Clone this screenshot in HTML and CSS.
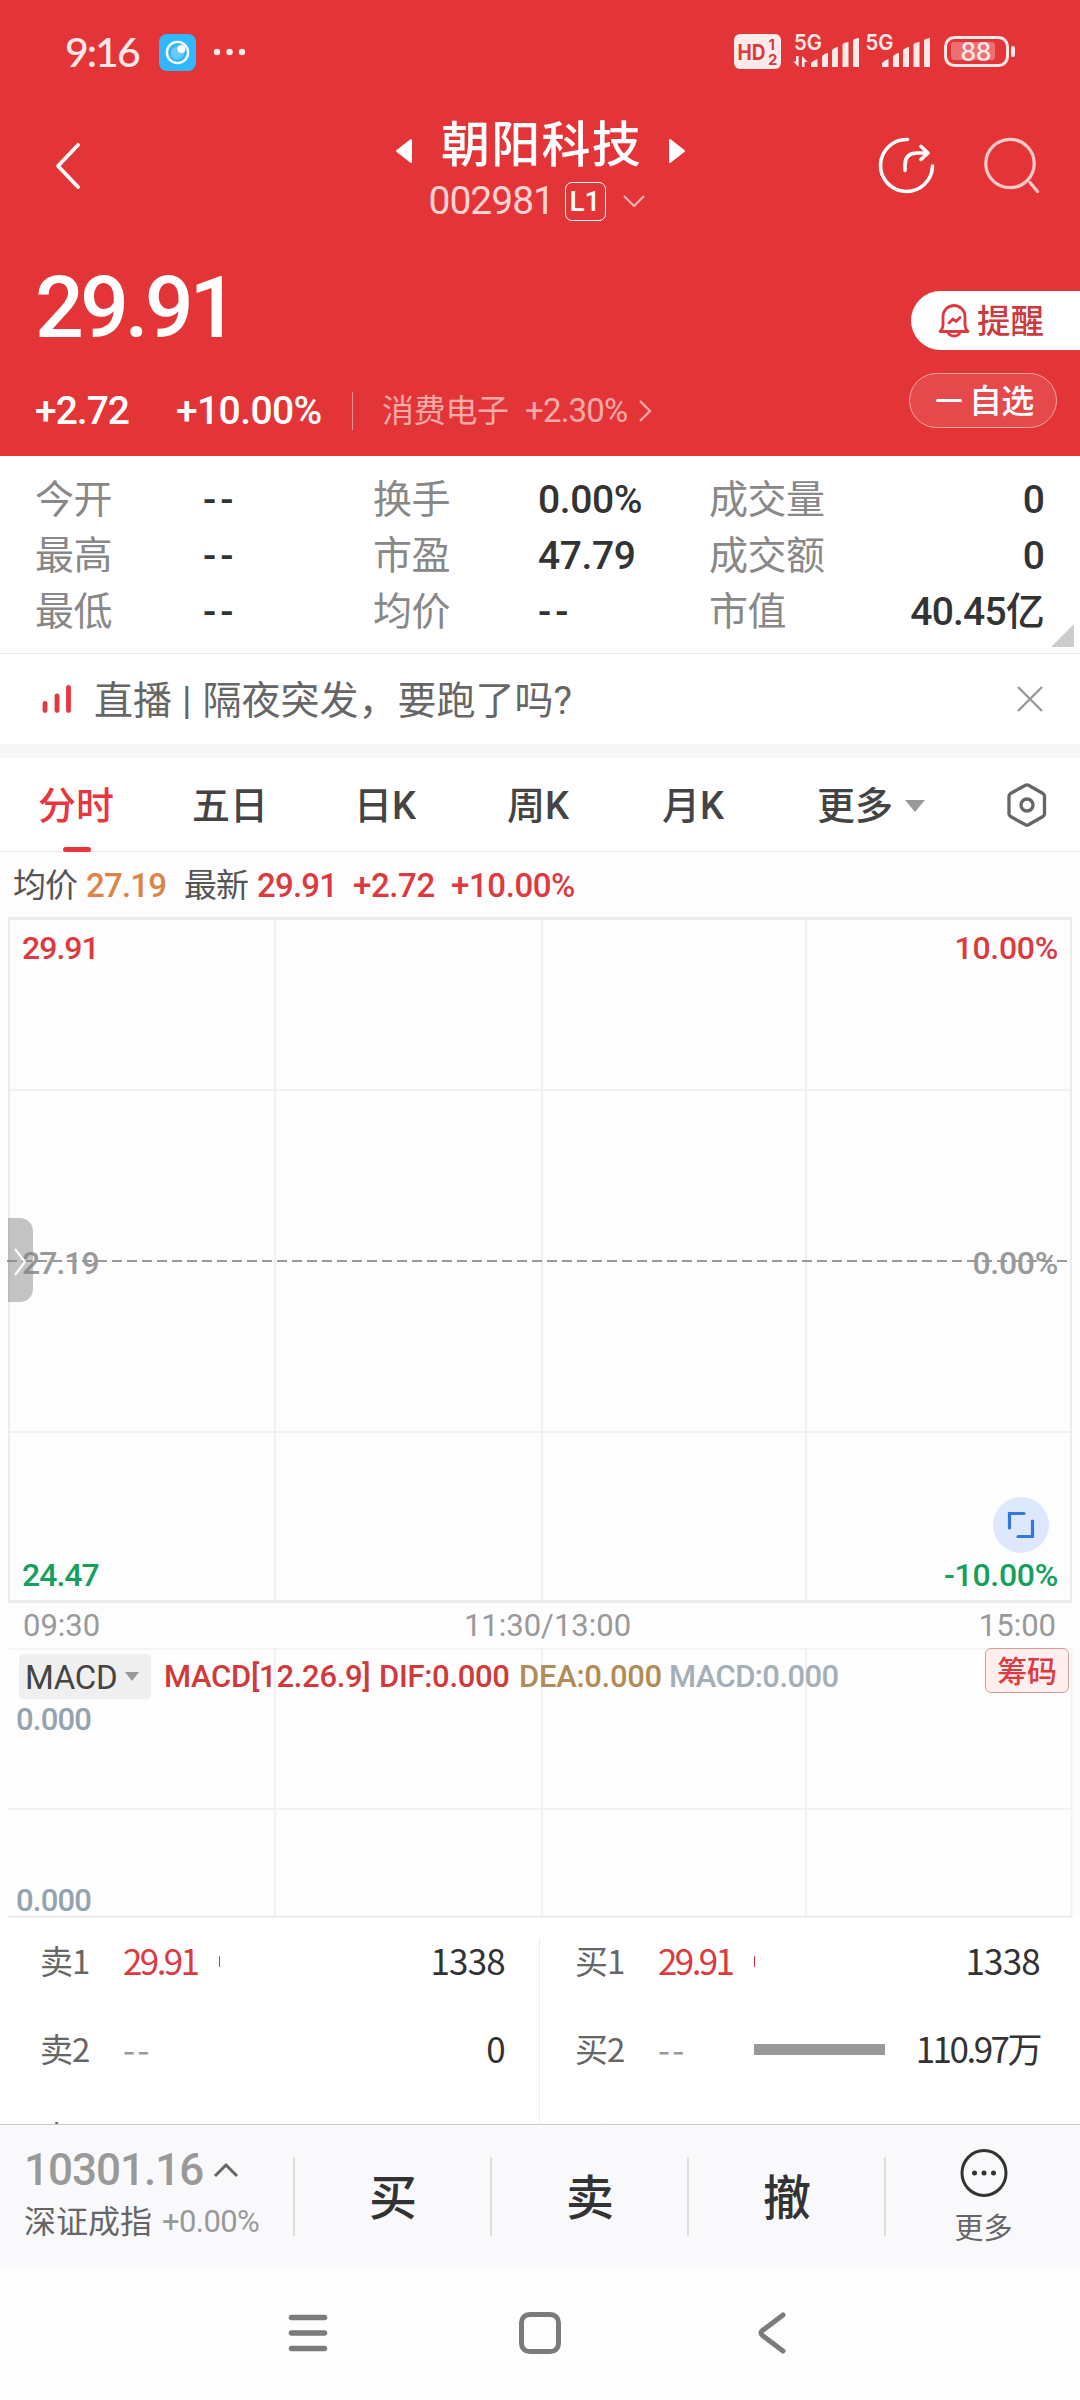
FILE: index.html
```html
<!DOCTYPE html>
<html lang="zh-CN">
<head>
<meta charset="utf-8">
<title>朝阳科技 002981</title>
<link rel="stylesheet" href="styles.css">
</head>
<body>
<div class="phone">
  <header class="header">
    <div class="status">
      <span class="clock">9:16</span>
      <svg class="app-icon" width="37" height="37" viewBox="0 0 37 37"><rect width="37" height="37" rx="8" fill="#30b7ff"/><circle cx="18.5" cy="18.5" r="10.6" fill="none" stroke="#fff" stroke-width="2.4"/><circle cx="18.5" cy="18.8" r="6.6" fill="#6cc8fb"/><circle cx="22.4" cy="15" r="4" fill="#fff"/></svg>
      <svg class="dots" width="34" height="8" viewBox="0 0 34 8"><g fill="#ffe8e8"><circle cx="4" cy="4" r="3.2"/><circle cx="16.6" cy="4" r="3.2"/><circle cx="29" cy="4" r="3.2"/></g></svg>
      <svg class="status-right" width="290" height="40" viewBox="730 32 290 40">
        <rect x="734" y="34" width="47" height="35" rx="6" fill="#fdeaea"/>
        <g class="hd"><text x="737.5" y="59.5" font-size="21" textLength="28" lengthAdjust="spacingAndGlyphs">HD</text><text x="768.5" y="50" font-size="15">1</text><text x="768" y="64.500" font-size="15">2</text></g>
        <g class="net"><text x="794" y="50" font-size="22" textLength="28" lengthAdjust="spacingAndGlyphs">5G</text><text x="865.500" y="50" font-size="22" textLength="28" lengthAdjust="spacingAndGlyphs">5G</text></g>
        <g fill="#ffe8e8">
          <path d="M811 67v-4q3-3 6.500-4v8zM822 67v-11q3-3 6-3v14zM832 67v-17q3-3 6-3v20zM842.500 67v-23q3-2 6-2v25zM853 67v-27q3-2 6-2v29z"/>
          <path d="M882 67v-4q3-3 6.500-4v8zM893 67v-11q3-3 6-3v14zM903 67v-17q3-3 6-3v20zM913.500 67v-23q3-2 6-2v25zM924 67v-27q3-2 6-2v29z"/>
          <rect x="1011" y="46" width="4" height="11" rx="2"/>
          <path d="M796 56h2.600v11L793 61.500h3zM802 67h2.600v-5h3L802 56z"/>
        </g>
        <rect x="945.500" y="37.500" width="62" height="28" rx="9" fill="none" stroke="#ffe8e8" stroke-width="3"/>
        <rect x="951" y="42" width="44" height="18" rx="3" fill="#ec6f71"/>
        <g class="net battery"><text x="960.500" y="61" font-size="25" textLength="31">88</text></g>
      </svg>
    </div>

    <div class="titlebar">
      <svg class="back" width="28" height="48" viewBox="0 0 28 48"><path d="M24 3L4 24l20 21" fill="none" stroke="#fff" stroke-width="3.800" stroke-linecap="round" stroke-linejoin="round"/></svg>
      <div class="title">
        <div class="name-row">
          <svg width="18" height="26" viewBox="0 0 18 26"><path d="M16 2v22L2 13z" fill="#fff" stroke="#fff" stroke-width="2" stroke-linejoin="round"/></svg>
          <h1>朝阳科技</h1>
          <svg width="18" height="26" viewBox="0 0 18 26"><path d="M2 2v22l14-11z" fill="#fff" stroke="#fff" stroke-width="2" stroke-linejoin="round"/></svg>
        </div>
        <div class="code-row">
          <span class="code">002981</span><span class="level">L1</span>
          <svg width="24" height="14" viewBox="0 0 24 14"><path d="M2 2l10 10L22 2" fill="none" stroke="#fbb3b4" stroke-width="2.200"/></svg>
        </div>
      </div>
      <svg class="share" width="60" height="60" viewBox="876 135 60 60"><g fill="none" stroke="#fff" stroke-width="3.600" stroke-linecap="round"><path d="M907.500 139.500A26 26 0 1 0 932.500 166"/><path d="M905 170.500v-5.500q0-12 12-12h10.500M921 146.500l7 6.500-7 6.500" stroke-linejoin="round"/></g></svg>
      <svg class="search" width="60" height="60" viewBox="982 135 60 60"><g fill="none" stroke="#ffcaca" stroke-width="3.200" stroke-linecap="round"><circle cx="1010" cy="163.500" r="24.200"/><path d="M1030 182.500l7.500 9"/></g></svg>
    </div>

    <div class="quote">
      <div class="quote-main">
        <div class="price">29.91</div>
        <div class="change-row">
          <span class="chg">+2.72</span><span class="pct">+10.00%</span><span class="bar"></span>
          <span class="sector">消费电子</span><span class="sector-pct">+2.30%</span>
          <svg width="14" height="24" viewBox="0 0 14 24"><path d="M2 2l10 10L2 22" fill="none" stroke="#fbaaab" stroke-width="2.400"/></svg>
        </div>
      </div>
      <div class="quote-actions">
        <div class="remind">
          <svg width="32" height="34" viewBox="0 0 32 34"><g fill="none" stroke="#dc3a40" stroke-width="2.800" stroke-linejoin="round" stroke-linecap="round"><path d="M2 27.500q3-3 3-6v-9a11 11 0 0 1 22 0v9q0 3 3 6z"/><path d="M10 28.500q1.500 3.500 6 3.500t6-3.500"/><path d="M11 19l4-4 3 2.500 4-4"/></g></svg>
          <span>提醒</span>
        </div>
        <div class="watch"><i></i><span>自选</span></div>
      </div>
    </div>
  </header>

  <section class="stats">
    <span class="k">今开</span><span class="v dash">--</span><span class="k">换手</span><span class="v">0.00%</span><span class="k">成交量</span><span class="v end">0</span>
    <span class="k">最高</span><span class="v dash">--</span><span class="k">市盈</span><span class="v">47.79</span><span class="k">成交额</span><span class="v end">0</span>
    <span class="k">最低</span><span class="v dash">--</span><span class="k">均价</span><span class="v dash">--</span><span class="k">市值</span><span class="v end">40.45亿</span>
    <i class="corner"></i>
  </section>

  <section class="notice">
    <svg width="30" height="30" viewBox="0 0 30 30"><g stroke="#e8363f" stroke-width="4.800" stroke-linecap="round"><path d="M3 19.500v7M15 12v14.500M26.500 3.500v23"/></g></svg>
    <span class="notice-text">直播<b>|</b>隔夜突发，要跑了吗?</span>
    <svg class="close" width="28" height="28" viewBox="0 0 28 28"><path d="M2 2l24 24M26 2L2 26" stroke="#999" stroke-width="2.400"/></svg>
  </section>

  <nav class="tabs">
    <span class="tab active">分时</span><span class="tab">五日</span><span class="tab">日K</span><span class="tab">周K</span><span class="tab">月K</span><span class="tab more">更多<i></i></span>
    <svg width="44" height="48" viewBox="0 0 44 48"><g fill="none" stroke="#666" stroke-width="3.300" stroke-linejoin="round"><path d="M20.500 4.300q1.500-.8 3 0l14.500 8.200q1.500 1 1.500 2.500v18q0 1.500-1.500 2.500l-14.500 8.200q-1.500.8-3 0L5.500 35.500Q4 34.500 4 33V15q0-1.500 1.500-2.500z"/><circle cx="22" cy="24" r="6"/></g></svg>
  </nav>

  <div class="summary">
    <span class="lbl">均价</span><span class="orange">27.19</span><span class="lbl l2">最新</span><span class="red p">29.91</span><span class="red c">+2.72</span><span class="red">+10.00%</span>
  </div>

  <section class="chart">
    <svg class="grid" width="1080" height="687" viewBox="0 916 1080 687">
      <g fill="#ececec">
        <rect x="8" y="917" width="1064" height="3"/><rect x="8" y="1600" width="1064" height="3"/>
        <rect x="8" y="917" width="2" height="686"/><rect x="1070" y="917" width="2" height="686"/>
      </g>
      <g fill="#f0f0f0">
        <rect x="274" y="920" width="2" height="680"/><rect x="541" y="920" width="2" height="680"/><rect x="805" y="920" width="2" height="680"/>
        <rect x="10" y="1089" width="1060" height="2"/><rect x="10" y="1431" width="1060" height="2"/>
      </g>
      <path d="M7 1261H1072" stroke="#999" stroke-width="2" stroke-dasharray="10 5"/>
    </svg>
    <span class="tick red top left">29.91</span><span class="tick red top right">10.00%</span>
    <span class="tick mid left">27.19</span><span class="tick mid right">0.00%</span>
    <span class="tick green bottom left">24.47</span><span class="tick green bottom right">-10.00%</span>
    <div class="handle"><svg width="14" height="30" viewBox="0 0 14 30"><path d="M2 2l10 13L2 28" fill="none" stroke="#fff" stroke-width="2.200"/></svg></div>
    <div class="expand"><svg width="28" height="28" viewBox="0 0 28 28"><path d="M2.500 17V2.500H17M25.500 10v15.500H11" fill="none" stroke="#3478dc" stroke-width="3.200" stroke-linecap="round"/></svg></div>
  </section>
  <div class="times"><span>09:30</span><span class="noon">11:30/13:00</span><span>15:00</span></div>

  <section class="macd">
    <svg class="grid" width="1080" height="270" viewBox="0 1648 1080 270">
      <g fill="#f2f2f2"><rect x="8" y="1648" width="1064" height="1.500"/><rect x="8" y="1808" width="1064" height="2"/><rect x="274" y="1648" width="2" height="269"/><rect x="541" y="1648" width="2" height="269"/><rect x="805" y="1648" width="2" height="269"/><rect x="1071" y="1648" width="1.500" height="269"/></g>
      <rect x="8" y="1916" width="1064" height="1.500" fill="#e8e8e8"/>
    </svg>
    <div class="macd-head">
      <span class="select">MACD<i></i></span>
      <span class="m1">MACD[12.26.9]</span><span class="m2">DIF:0.000</span><span class="m3">DEA:0.000</span><span class="m4">MACD:0.000</span>
      <span class="chips">筹码</span>
    </div>
    <div class="scale"><span>0.000</span><span>0.000</span></div>
  </section>

  <section class="book">
    <div class="side sell">
      <div class="row"><span class="lv">卖1</span><span class="pr">29.91</span><span class="vol"><i style="width:1px"></i></span><span class="qty">1338</span></div>
      <div class="row none"><span class="lv">卖2</span><span class="pr">--</span><span class="vol"></span><span class="qty">0</span></div>
      <div class="row none"><span class="lv">卖3</span><span class="pr">--</span><span class="vol"></span><span class="qty">0</span></div>
    </div>
    <div class="side buy">
      <div class="row"><span class="lv">买1</span><span class="pr">29.91</span><span class="vol"><i style="width:1px"></i></span><span class="qty">1338</span></div>
      <div class="row none"><span class="lv">买2</span><span class="pr">--</span><span class="vol"><i style="width:131px"></i></span><span class="qty wan">110.97万</span></div>
      <div class="row none"><span class="lv">买3</span><span class="pr">--</span><span class="vol"></span><span class="qty">0</span></div>
    </div>
  </section>

  <footer class="trade">
    <div class="index">
      <div class="idx-val"><span>10301.16</span><svg width="26" height="16" viewBox="0 0 26 16"><path d="M2 14L13 3l11 11" fill="none" stroke="#666" stroke-width="3"/></svg></div>
      <div class="idx-name"><span>深证成指</span><em>+0.00%</em></div>
    </div>
    <div class="act">买</div><div class="act">卖</div><div class="act">撤</div>
    <div class="act more-act">
      <svg width="48" height="50" viewBox="0 0 48 50"><ellipse cx="24" cy="25" rx="22" ry="22.500" fill="none" stroke="#333" stroke-width="3"/><g fill="#333"><circle cx="14.500" cy="25" r="2.500"/><circle cx="24" cy="25" r="2.500"/><circle cx="33.500" cy="25" r="2.500"/></g></svg>
      <span>更多</span>
    </div>
  </footer>

  <div class="sysnav">
    <svg width="46" height="46" viewBox="0 0 46 46"><path d="M6.500 7.500h33M6.500 23h33M6.500 38.500h33" stroke="#7b7b7b" stroke-width="5.600" stroke-linecap="round"/></svg>
    <svg width="46" height="46" viewBox="0 0 46 46"><rect x="4.500" y="4.500" width="37" height="37" rx="8" fill="none" stroke="#7b7b7b" stroke-width="5"/></svg>
    <svg width="46" height="46" viewBox="0 0 46 46"><path d="M34 5L13.500 20.500q-3 2.500 0 5L34 41" fill="none" stroke="#7b7b7b" stroke-width="5" stroke-linecap="round"/></svg>
  </div>
</div>
</body>
</html>
```
FILE: styles.css
```css
* { box-sizing: border-box; }
body { margin: 0; background: #fdfdfe; font-family: Roboto, "Noto Sans CJK SC", sans-serif; color: #333; }
svg { display: block; flex: none; }
i, em, b, h1 { font-style: normal; font-weight: inherit; margin: 0; }
.phone { width: 1080px; height: 2400px; overflow: hidden; display: flex; flex-direction: column; }
.red { color: #dc3a3f; }
.green { color: #14a05c; }

/* header */
.header { height: 456px; flex: none; background: #e33537; color: #fff; display: flex; flex-direction: column; }
.status { height: 104px; display: flex; align-items: center; padding: 0 60px 0 65px; }
.clock { width: 94px; font: 500 41px/104px Lato, sans-serif; letter-spacing: -2px; color: #ffe8e8; }
.dots { margin-left: 17px; }
.status-right { margin-left: auto; overflow: visible; }
.status-right text { font-family: Inter, sans-serif; font-weight: 700; }
.hd text { fill: #d93a3d; }
.net text { fill: #ffe8e8; font-weight: 600; }
.battery text { font-weight: 500; }
.titlebar { height: 126px; display: flex; align-items: flex-start; padding: 0 38px 0 54px; }
.back { margin-top: 38px; }
.title { flex: 1; display: flex; flex-direction: column; align-items: center; margin-left: 123px; }
.name-row { display: flex; align-items: center; gap: 28px; height: 84px; padding-top: 10px; }
h1 { font-size: 49px; font-weight: 500; line-height: 74px; letter-spacing: 1.2px; margin: -11px -2px 0 0; }
.code-row { display: flex; align-items: center; height: 40px; margin-top: -7px; margin-left: -7px; }
.code { font-size: 39px; line-height: 40px; letter-spacing: -1px; color: #ffd3d3; width: 136px; }
.level { width: 41px; height: 39px; border: 1.500px solid #fff; border-radius: 7px; font-size: 28px; line-height: 38px; text-align: center; font-weight: 500; margin-right: 16px; }
.share { margin-top: 31px; margin-right: 46px; }
.search { margin-top: 31px; }
.quote { height: 226px; display: flex; justify-content: space-between; }
.quote-main { padding-left: 35px; }
.price { font-size: 86px; font-weight: 500; line-height: 100px; letter-spacing: -4px; margin-top: 28px; }
.change-row { display: flex; align-items: center; height: 50px; margin-top: 28px; line-height: 50px; }
.chg, .pct { font-size: 39px; font-weight: 500; letter-spacing: -.6px; }
.chg { width: 141px; letter-spacing: -1px; }
.pct { width: 176px; }
.bar { width: 1px; height: 38px; background: #f09394; margin-right: 29px; }
.sector { font-size: 32px; color: #fbaaab; width: 143px; letter-spacing: -.3px; }
.sector-pct { font-size: 33px; color: #fbaaab; letter-spacing: -.8px; width: 113px; }
.quote-actions { display: flex; flex-direction: column; gap: 23px; padding-top: 61px; }
.remind { width: 169px; height: 59px; border-radius: 30px 0 0 30px; background: #fff; color: #cc3a3d; display: flex; align-items: center; padding-left: 27px; gap: 7px; font-size: 33.500px; line-height: 65px; font-weight: 500; }
.remind span { padding-top: 2px; }
.watch { width: 148px; height: 55px; margin-left: -2px; border-radius: 28px; border: 1px solid #f4a3a4; background: #e6494b; display: flex; align-items: center; gap: 7px; padding-left: 26px; font-size: 33px; line-height: 56px; font-weight: 500; letter-spacing: -.8px; }
.watch span { padding-top: 3px; }
.watch i { width: 26px; height: 3px; border-radius: 2px; background: #fff; }

/* key statistics */
.stats { position: relative; height: 198px; flex: none; padding: 16px 36px 13px 35px; display: grid; grid-template-columns: 168px 170px 165px 171px 150px 1fr; grid-auto-rows: 56px; line-height: 56px; font-size: 39px; border-bottom: 1.500px solid #ececec; background: #fff; }
.k { color: #888; letter-spacing: -.5px; }
.v { font-weight: 500; letter-spacing: -.4px; }
.v.dash { letter-spacing: 4px; }
.end { text-align: right; letter-spacing: -.8px; }
.corner { position: absolute; right: 6px; bottom: 6px; border: 0 solid transparent; border-width: 0 0 23px 23px; border-bottom-color: #ccc; }

.notice { height: 90px; flex: none; display: flex; align-items: center; padding: 0 36px 0 42px; background: #fff; }
.notice-text { flex: 1; font-size: 39px; line-height: 86px; padding-top: 4px; color: #666; margin-left: 22px; }
.notice-text b { margin: 0 11px 0 10px; }

/* period tabs */
.tabs { height: 108px; flex: none; border-top: 14px solid #f7f7f7; border-bottom: 1.500px solid #e8e8e8; padding-left: 38px; display: grid; grid-template-columns: 154px 162px 153px 155px 155px 188px 44px; align-items: center; font-size: 38px; font-weight: 500; line-height: 90px; color: #444; background: #fff; }
.tab { position: relative; padding-top: 2px; }
.tab.active { color: #e8363f; }
.tab.active::after { content: ""; position: absolute; left: 25px; bottom: -1px; width: 28px; height: 5px; border-radius: 3px; background: #e8363f; }
.tab.more { display: flex; align-items: center; gap: 12px; }
.tab.more i { border: 10px solid transparent; border-top: 12px solid #999; border-bottom: 0; }

.summary { height: 64px; flex: none; padding: 0 0 0 13px; display: flex; font-size: 33px; line-height: 68px; font-weight: 500; letter-spacing: -.4px; }
.summary .lbl { font-weight: 400; color: #555; width: 73px; letter-spacing: -1px; }
.summary .orange { color: #dc8346; width: 98px; letter-spacing: -.8px; }
.summary .p { width: 96px; letter-spacing: -.8px; }
.summary .c { width: 98px; }

/* minute chart */
.chart { position: relative; height: 686px; flex: none; }
.grid { position: absolute; left: 0; top: 0; }
.tick { position: absolute; font-size: 32px; line-height: 38px; font-weight: 500; }
.tick.left { left: 22px; letter-spacing: -1px; }
.tick.right { right: 22px; letter-spacing: -.3px; }
.top { top: 13px; }
.mid { top: 328px; color: #999; }
.bottom { top: 640px; }
.handle { position: absolute; left: 8px; top: 302px; width: 25px; height: 84px; border-radius: 0 13px 13px 0; background: rgba(130,130,130,.47); display: flex; align-items: center; padding: 3px 0 0 5px; }
.expand { position: absolute; left: 993px; top: 581px; width: 56px; height: 56px; border-radius: 50%; background: #dde8fd; display: flex; align-items: center; justify-content: center; }
.times { height: 46px; flex: none; display: flex; justify-content: space-between; padding: 0 24px 0 23px; font-size: 31px; line-height: 48px; color: #999; }
.noon { margin-left: 16px; }

/* indicator panel */
.macd { position: relative; height: 270px; flex: none; }
.macd-head { position: relative; display: flex; height: 52px; padding-left: 19px; font-size: 31px; line-height: 58px; font-weight: 500; letter-spacing: -.3px; }
.select { display: flex; align-items: center; gap: 8px; width: 132px; height: 45px; margin: 6px 13px 0 0; padding: 3px 0 0 6px; border-radius: 5px; background: #efefef; color: #444; font-size: 33px; line-height: 42px; font-weight: 400; }
.select i { border: 7.500px solid transparent; border-top: 9px solid #999; border-bottom: 0; margin-top: -3px; }
.m1 { color: #cf3a3a; width: 215px; }
.m2 { color: #cf3a3a; width: 140px; }
.m3 { color: #b08d57; width: 150px; }
.m4 { color: #a4afb8; letter-spacing: -.6px; }
.chips { margin-left: auto; margin-right: 11px; width: 84px; height: 45px; border: 1.500px solid #d99; border-radius: 6px; background: #ffeeee; color: #dc3a42; font-size: 30px; line-height: 45px; text-align: center; }
.scale { position: relative; display: flex; flex-direction: column; justify-content: space-between; height: 218px; padding: 2px 0 0 16px; font-size: 31px; line-height: 36px; color: #94a3ae; font-weight: 500; letter-spacing: -.8px; }
.scale span:last-child { margin-bottom: -1px; }

/* order book */
.book { height: 206px; flex: none; display: grid; grid-template-columns: 539px 541px; overflow: hidden; background: #fff; font-family: "Noto Sans CJK SC", sans-serif; }
.side { margin-top: -2px; }
.sell { padding-left: 40px; }
.buy { padding-left: 36px; background: linear-gradient(#eee, #eee) 0 22px / 1px 100% no-repeat; }
.row { height: 88px; display: grid; grid-template-columns: 83px 96px 131px 155px; align-items: center; line-height: 88px; font-size: 35px; letter-spacing: -.8px; }
.lv { color: #666; font-size: 33px; letter-spacing: -1px; }
.pr { color: #dc3a42; letter-spacing: -2.6px; }
.none .pr { color: #999; letter-spacing: 2px; }
.vol i { display: block; height: 11px; margin-top: 2px; background: #dc3a42; }
.none .vol i { background: #999; }
.qty { text-align: right; }
.qty.wan { letter-spacing: -2.5px; }

/* trade bar */
.trade { height: 143px; flex: none; background: #f9f9fb; border-top: 1px solid #ccc; display: flex; }
.index { width: 293px; padding: 13px 0 0 24px; color: #999; }
.idx-val { display: flex; align-items: center; height: 64px; font-size: 44px; line-height: 64px; font-weight: 500; letter-spacing: -1px; }
.idx-val span { width: 189px; }
.idx-name { display: flex; font-size: 32px; line-height: 40px; }
.idx-name span { color: #666; width: 138px; }
.idx-name em { font-size: 31px; letter-spacing: -.6px; }
.act { width: 197px; padding-left: 3px; text-align: center; font-size: 48px; font-weight: 500; line-height: 148px; background: linear-gradient(#ddd, #ddd) 0 32px / 2px 79px no-repeat; }
.more-act { flex: 1; display: flex; flex-direction: column; align-items: center; padding-top: 23px; }
.more-act span { font-size: 29px; line-height: 40px; font-weight: 400; color: #666; margin-top: 11px; }

.sysnav { flex: 1; display: flex; justify-content: center; gap: 186px; padding: 43px 1px 0 0; }
```
